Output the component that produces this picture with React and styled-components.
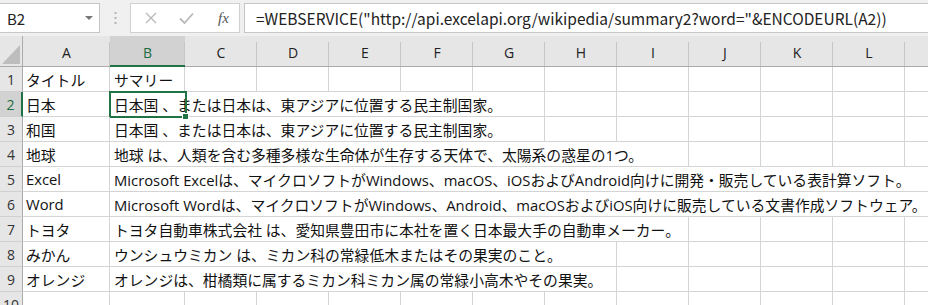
import React from 'react';
import styled, { createGlobalStyle } from 'styled-components';

const GlobalStyle = createGlobalStyle`
  html, body {
    margin: 0;
    padding: 0;
    background: #fff;
  }
  body {
    font-family: "Noto Sans CJK JP", "Liberation Sans", sans-serif;
    overflow: hidden;
  }
`;

const Window = styled.div`
  width: 928px;
  height: 305px;
  overflow: hidden;
  background: #fff;
`;

const FormulaBar = styled.div`
  display: flex;
  align-items: flex-start;
  height: 36px;
  padding-top: 3px;
  box-sizing: border-box;
  background: #f0f0f0;
`;

const NameBox = styled.div`
  width: 100px;
  height: 30px;
  box-sizing: border-box;
  border: 1px solid #c6c6c6;
  border-left: none;
  background: #fff;
  display: flex;
  align-items: center;
  justify-content: space-between;
  padding: 0 6px 0 7px;
  font-size: 15px;
  color: #222;
`;

const DropArrow = styled.span`
  width: 0;
  height: 0;
  border-left: 4px solid transparent;
  border-right: 4px solid transparent;
  border-top: 4px solid #777;
`;

const Grip = styled.div`
  width: 3px;
  height: 30px;
  margin: 0 13px 0 14px;
  display: flex;
  align-items: center;
`;

const ButtonBox = styled.div`
  width: 110px;
  height: 30px;
  box-sizing: border-box;
  border: 1px solid #d0d0d0;
  background: #fff;
  display: flex;
  align-items: center;
  padding-left: 14px;
  gap: 22px;
`;

const Fx = styled.span`
  font-family: "Liberation Serif", serif;
  font-style: italic;
  font-size: 15px;
  color: #555;
  margin-left: 2px;
`;

const FormulaInput = styled.div`
  flex: 1;
  margin-left: 4px;
  height: 30px;
  box-sizing: border-box;
  border: 1px solid #c6c6c6;
  border-right: none;
  background: #fff;
  display: flex;
  align-items: center;
  padding-left: 11px;
  font-size: 15.5px;
  color: #222;
  white-space: nowrap;
  overflow: hidden;
`;

const Sheet = styled.div`
  display: grid;
  grid-template-columns: 23px 87px 75px repeat(11, 72px);
  grid-template-rows: 31px;
  grid-auto-rows: 25px;
`;

const Corner = styled.div`
  background: #e6e6e6;
  border-right: 1px solid #ababab;
  border-bottom: 1px solid #ababab;
  box-sizing: border-box;
  display: flex;
  align-items: flex-end;
  justify-content: flex-end;
  padding: 0 2px 2px 0;
`;

const ColHead = styled.div`
  box-sizing: border-box;
  background:
    linear-gradient(#c6c6c6, #c6c6c6) right bottom / 1px calc(100% - 6px) no-repeat,
    ${p => (p.$active ? '#d2d2d2' : '#e6e6e6')};
  border-bottom: ${p => (p.$active ? '2px solid #217346' : '1px solid #ababab')};
  display: flex;
  align-items: center;
  justify-content: center;
  padding-top: ${p => (p.$active ? '4px' : '3px')};
  font-family: "Open Sans", "Noto Sans CJK JP", sans-serif;
  font-size: 14px;
  color: ${p => (p.$active ? '#1d6b40' : '#222')};
`;

const RowHead = styled.div`
  box-sizing: border-box;
  background: ${p => (p.$active ? '#d2d2d2' : '#e6e6e6')};
  border-right: ${p => (p.$active ? '2px solid #217346' : '1px solid #ababab')};
  border-bottom: 1px solid #d0d0d0;
  display: flex;
  align-items: center;
  justify-content: center;
  font-family: "Open Sans", "Noto Sans CJK JP", sans-serif;
  font-size: 14px;
  color: ${p => (p.$active ? '#1d6b40' : '#333')};
`;

const Cell = styled.div`
  position: relative;
  grid-column: span ${p => p.$span || 1};
  box-sizing: border-box;
  border-right: 1px solid #d4d4d4;
  border-bottom: 1px solid #d4d4d4;
  display: flex;
  align-items: center;
  padding-left: ${p => (p.$wide ? '4px' : '3px')};
  font-family: "Open Sans", "Noto Sans CJK JP", sans-serif;
  font-size: 14.8px;
  color: #111;
  white-space: nowrap;
`;

const Selection = styled.div`
  position: absolute;
  left: -1px;
  top: -1px;
  width: 78px;
  height: 27px;
  box-sizing: border-box;
  border: 2px solid #217346;
  pointer-events: none;
`;

const Handle = styled.span`
  position: absolute;
  right: -4px;
  bottom: -4px;
  width: 5px;
  height: 5px;
  background: #217346;
  border: 1px solid #fff;
`;

// M is off the right edge, only its left part shows
const columns = ['A', 'B', 'C', 'D', 'E', 'F', 'G', 'H', 'I', 'J', 'K', 'L', ''];

const rows = [
  ['タイトル', 'サマリー', 1],
  ['日本', '日本国 、または日本は、東アジアに位置する民主制国家。', 6],
  ['和国', '日本国 、または日本は、東アジアに位置する民主制国家。', 6],
  ['地球', '地球 は、人類を含む多種多様な生命体が生存する天体で、太陽系の惑星の1つ。', 8],
  ['Excel', 'Microsoft Excelは、マイクロソフトがWindows、macOS、iOSおよびAndroid向けに開発・販売している表計算ソフト。', 12],
  ['Word', 'Microsoft Wordは、マイクロソフトがWindows、Android、macOSおよびiOS向けに販売している文書作成ソフトウェア。', 12],
  ['トヨタ', 'トヨタ自動車株式会社 は、愛知県豊田市に本社を置く日本最大手の自動車メーカー。', 8],
  ['みかん', 'ウンシュウミカン は、ミカン科の常緑低木またはその果実のこと。', 7],
  ['オレンジ', 'オレンジは、柑橘類に属するミカン科ミカン属の常緑小高木やその果実。', 7],
  ['', '', 1],
];

function CornerMark() {
  return (
    <svg width="18" height="19" viewBox="0 0 18 19">
      <polygon points="18,0 18,19 0,19" fill="#bdbdbd" />
    </svg>
  );
}

function GripDots() {
  return (
    <svg width="3" height="12" viewBox="0 0 3 12">
      <rect x="0.5" y="0" width="2" height="2" fill="#b4b4b4" />
      <rect x="0.5" y="5" width="2" height="2" fill="#b4b4b4" />
      <rect x="0.5" y="10" width="2" height="2" fill="#b4b4b4" />
    </svg>
  );
}

function CancelIcon() {
  return (
    <svg width="12" height="12" viewBox="0 0 12 12">
      <path d="M1 1 L11 11 M11 1 L1 11" stroke="#b9b9b9" strokeWidth="1.4" fill="none" />
    </svg>
  );
}

function EnterIcon() {
  return (
    <svg width="15" height="12" viewBox="0 0 15 12">
      <path d="M1 6.5 L5.5 11 L14 1.5" stroke="#b9b9b9" strokeWidth="1.8" fill="none" />
    </svg>
  );
}

export default function App() {
  return (
    <Window>
      <GlobalStyle />
      <FormulaBar>
        <NameBox>
          B2
          <DropArrow />
        </NameBox>
        <Grip><GripDots /></Grip>
        <ButtonBox>
          <CancelIcon />
          <EnterIcon />
          <Fx>fx</Fx>
        </ButtonBox>
        <FormulaInput>=WEBSERVICE("http://api.excelapi.org/wikipedia/summary2?word="&amp;ENCODEURL(A2))</FormulaInput>
      </FormulaBar>

      <Sheet>
        <Corner><CornerMark /></Corner>
        {columns.map((c, i) => (
          <ColHead key={i} $active={c === 'B'}>{c}</ColHead>
        ))}

        {rows.map(([title, summary, span], i) => {
          const n = i + 1;
          const rest = columns.length - 1 - span;
          return (
            <React.Fragment key={n}>
              <RowHead $active={n === 2}>{n}</RowHead>
              <Cell>{title}</Cell>
              <Cell $span={span} $wide>
                {summary}
                {n === 2 && (
                  <Selection>
                    <Handle />
                  </Selection>
                )}
              </Cell>
              {Array.from({ length: rest }).map((_, k) => (
                <Cell key={k} />
              ))}
            </React.Fragment>
          );
        })}
      </Sheet>
    </Window>
  );
}
